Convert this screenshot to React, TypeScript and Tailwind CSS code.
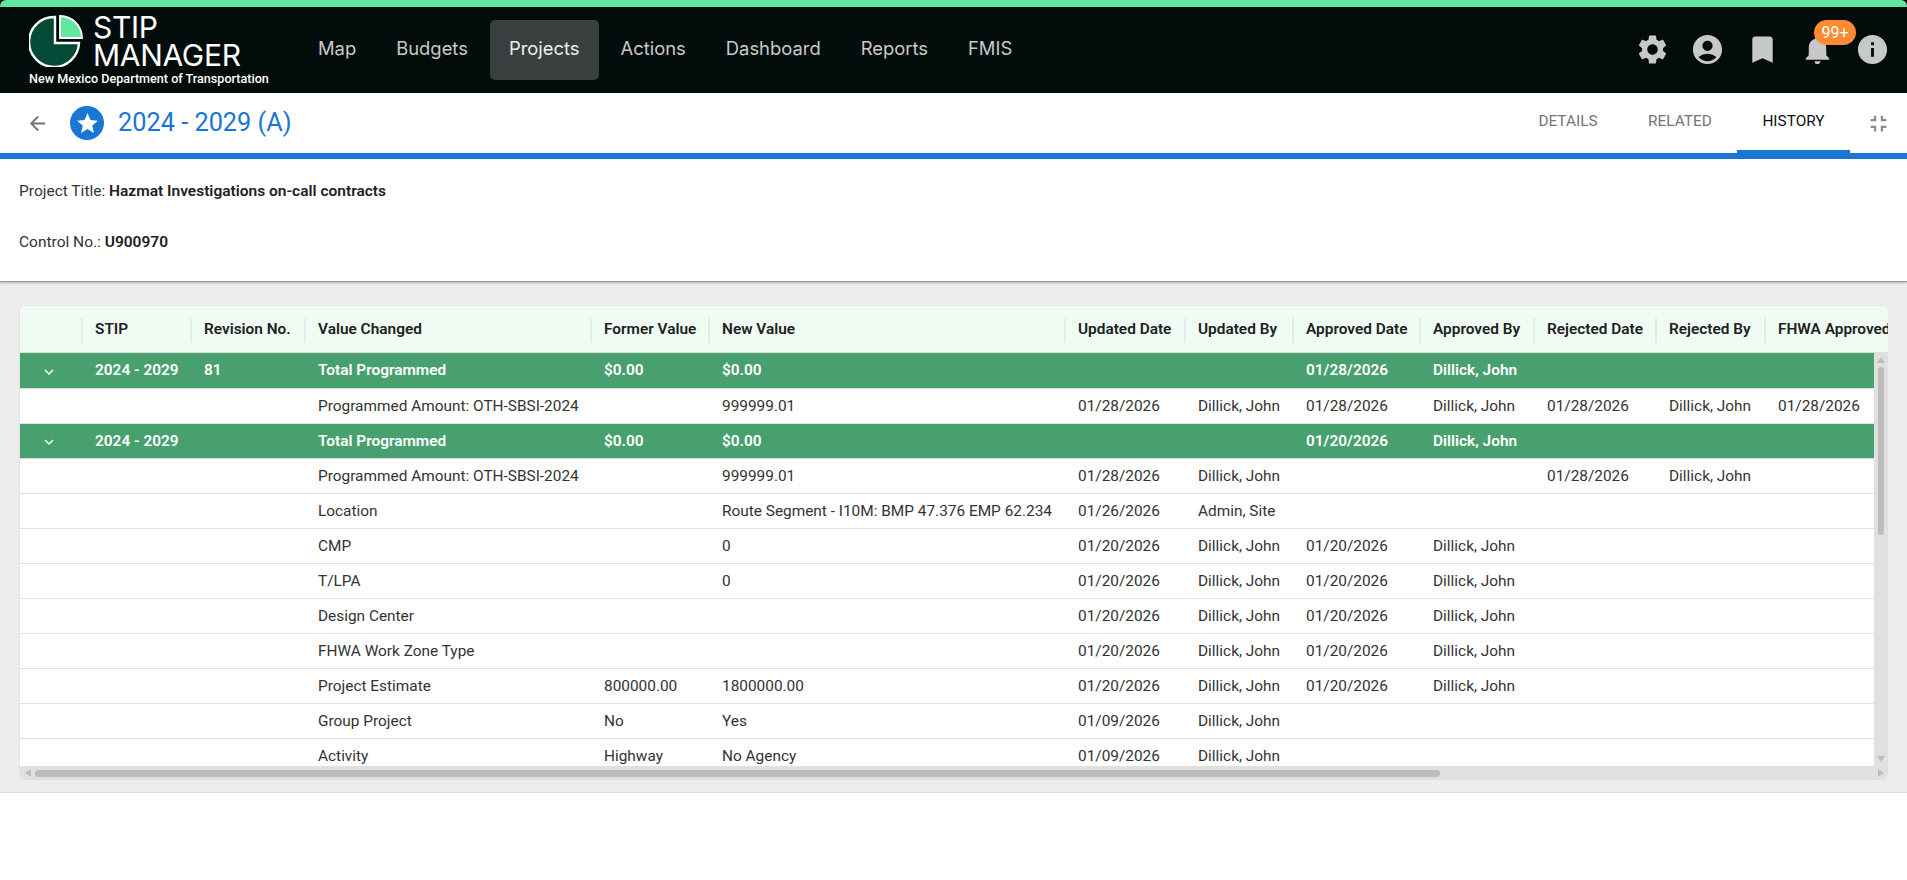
import { MdAccountCircle, MdArrowBack, MdBookmark, MdFullscreenExit, MdInfo, MdKeyboardArrowDown, MdNotifications, MdSettings, MdStar } from "react-icons/md";

const navItems = ["Map", "Budgets", "Projects", "Actions", "Dashboard", "Reports", "FMIS"];

const columns = [
    "",
    "STIP",
    "Revision No.",
    "Value Changed",
    "Former Value",
    "New Value",
    "Updated Date",
    "Updated By",
    "Approved Date",
    "Approved By",
    "Rejected Date",
    "Rejected By",
    "FHWA Approved Date",
];

const gridCols = "grid grid-cols-[63px_109px_114px_286px_118px_356px_120px_108px_127px_114px_122px_109px_180px]";

const dj = "Dillick, John";

// values start at the STIP column
const rows: { group?: boolean; cells: string[] }[] = [
    { group: true, cells: ["2024 - 2029", "81", "Total Programmed", "$0.00", "$0.00", "", "", "01/28/2026", dj] },
    { cells: ["", "", "Programmed Amount: OTH-SBSI-2024", "", "999999.01", "01/28/2026", dj, "01/28/2026", dj, "01/28/2026", dj, "01/28/2026"] },
    { group: true, cells: ["2024 - 2029", "", "Total Programmed", "$0.00", "$0.00", "", "", "01/20/2026", dj] },
    { cells: ["", "", "Programmed Amount: OTH-SBSI-2024", "", "999999.01", "01/28/2026", dj, "", "", "01/28/2026", dj] },
    { cells: ["", "", "Location", "", "Route Segment - I10M: BMP 47.376 EMP 62.234", "01/26/2026", "Admin, Site"] },
    { cells: ["", "", "CMP", "", "0", "01/20/2026", dj, "01/20/2026", dj] },
    { cells: ["", "", "T/LPA", "", "0", "01/20/2026", dj, "01/20/2026", dj] },
    { cells: ["", "", "Design Center", "", "", "01/20/2026", dj, "01/20/2026", dj] },
    { cells: ["", "", "FHWA Work Zone Type", "", "", "01/20/2026", dj, "01/20/2026", dj] },
    { cells: ["", "", "Project Estimate", "800000.00", "1800000.00", "01/20/2026", dj, "01/20/2026", dj] },
    { cells: ["", "", "Group Project", "No", "Yes", "01/09/2026", dj] },
    { cells: ["", "", "Activity", "Highway", "No Agency", "01/09/2026", dj] },
];

function Logo() {
    return (
        <svg width="56" height="56" viewBox="0 0 56 56" className="shrink-0">
            <path d="M26 6 A25 25 0 1 0 50 32 L26 32 Z" fill="#044a36" stroke="#ffffff" strokeWidth="2.4" />
            <path d="M31 5 A22 22 0 0 1 53 27 L31 27 Z" fill="#63e6a0" stroke="#ffffff" strokeWidth="1.8" />
        </svg>
    );
}

function Triangle({ dir }: { dir: "up" | "down" | "left" | "right" }) {
    const pts = {
        up: "4,1 8,7 0,7",
        down: "0,1 8,1 4,7",
        left: "7,0 7,8 1,4",
        right: "1,0 1,8 7,4",
    }[dir];
    return (
        <svg width="8" height="8" viewBox="0 0 8 8">
            <polygon points={pts} fill="#bdbdbd" />
        </svg>
    );
}

export default function App() {
    return (
        <div className="h-[880px] bg-white flex flex-col overflow-hidden font-['Roboto',sans-serif] text-[15.4px] text-[#333333]">
            {/* Top bar */}
            <div className="bg-[#020d0b] shrink-0">
                <div className="h-[7px] bg-[#63e6a0] rounded-t-[6px]"></div>
                <div className="h-[86px] flex items-center pl-[29px]">
                    <div className="w-[262px] h-[86px] flex flex-col shrink-0">
                        <div className="flex h-[64px] items-center">
                            <div className="w-[64px]"><Logo /></div>
                            <div className="font-['Inter',sans-serif] text-white text-[30px] leading-[28px] font-normal tracking-[-0.3px] pt-[3px]">
                                <div>STIP</div>
                                <div>MANAGER</div>
                            </div>
                        </div>
                        <div className="text-white text-[12.6px] leading-[16px] font-medium whitespace-nowrap">New Mexico Department of Transportation</div>
                    </div>
                    <nav className="flex items-center gap-[4px] font-['Inter',sans-serif] text-[18.4px] ml-[9px]">
                        {navItems.map((item) => (
                            <div
                                key={item}
                                className={item === "Projects" ? "h-[60px] pb-[2px] flex items-center px-[19px] rounded-[5px] bg-[#383f3e] text-[#eeeeee]" : "h-[60px] pb-[2px] flex items-center px-[18px] text-[#c9c9c9]"}
                            >
                                {item}
                            </div>
                        ))}
                    </nav>
                    <div className="ml-auto mr-[17px] flex items-center gap-[20px] text-[#c8c8c8] -mt-[2px]">
                        <MdSettings size={35} />
                        <MdAccountCircle size={35} />
                        <MdBookmark size={35} />
                        <div className="relative">
                            <MdNotifications size={35} />
                            <span className="absolute -top-[12px] left-[14px] w-[42px] h-[25px] rounded-full bg-[#ff8a33] text-white text-[16px] leading-[25px] text-center">99+</span>
                        </div>
                        <MdInfo size={35} />
                    </div>
                </div>
            </div>

            {/* Title bar */}
            <div className="h-[66px] shrink-0 flex items-center border-b-[6px] border-[#1976d2] pl-[26px] pr-[15px]">
                <MdArrowBack size={23} className="text-[#757575]" />
                <div className="ml-[21px] w-[34px] h-[34px] rounded-full bg-[#1976d2] flex items-center justify-center">
                    <MdStar size={25} className="text-white" />
                </div>
                <div className="ml-[14px] text-[25.3px] text-[#1976d2]">2024 - 2029 (A)</div>
                <div className="ml-auto flex items-center h-[60px]">
                    <div className="w-[110px] h-[60px] pb-[2px] flex items-center justify-center text-[#757575]">DETAILS</div>
                    <div className="w-[114px] h-[60px] pb-[2px] flex items-center justify-center text-[#757575]">RELATED</div>
                    <div className="w-[113px] h-[66px] -mb-[6px] pt-[1px] flex items-center justify-center text-[#111111] border-b-[9px] border-[#1976d2]">HISTORY</div>
                    <MdFullscreenExit size={27} className="ml-[15px] text-[#8c8c8c]" />
                </div>
            </div>

            {/* Project info */}
            <div className="h-[123px] shrink-0 pl-[19px] pt-[22px] text-[15.5px] border-b border-[#9a9a9a] shadow-[0_1px_2px_rgba(0,0,0,0.25)] relative">
                <div className="h-[20px] leading-[20px]">Project Title: <span className="font-semibold text-[#212121]">Hazmat Investigations on-call contracts</span></div>
                <div className="h-[20px] leading-[20px] mt-[31px]">Control No.: <span className="font-semibold text-[#212121]">U900970</span></div>
            </div>

            {/* History grid */}
            <div className="h-[511px] shrink-0 bg-[#ededed] border-b border-[#dddddd] pt-[23px] pl-[19px] pr-[19px]">
                <div className="h-[475px] rounded-[6px] overflow-hidden border-l border-t border-[#e3e3e3] bg-white flex flex-col">
                    <div className="h-[47px] shrink-0 overflow-hidden bg-[#eefcf4] border-b border-[#dddddd]">
                        <div className={`${gridCols} w-[1906px] h-[46px] font-semibold text-[#212121]`}>
                            {columns.map((col, i) => (
                                <div key={i} className="flex items-center justify-between pl-[12px] pt-[2px] whitespace-nowrap overflow-hidden">
                                    <span>{col}</span>
                                    <span className="w-[2px] h-[25px] shrink-0 bg-[#e4eae7]"></span>
                                </div>
                            ))}
                        </div>
                    </div>
                    <div className="flex-1 flex min-h-0">
                        <div className="flex-1 min-w-0 overflow-hidden">
                            <div className="w-[1906px]">
                                {rows.map((row, r) => (
                                    <div
                                        key={r}
                                        className={row.group ? `${gridCols} h-[35px] first:h-[36px] pt-[1px] items-center bg-[#48a06f] text-white font-semibold border-b border-[#dddddd]` : `${gridCols} h-[35px] pt-[1px] items-center bg-white border-b border-[#e0e0e0]`}
                                    >
                                        <div className="flex justify-center pr-[6px] pt-[1px]">
                                            {row.group ? <MdKeyboardArrowDown size={18} /> : null}
                                        </div>
                                        {row.cells.map((cell, c) => (
                                            <div key={c} className="pl-[12px] whitespace-nowrap">{cell}</div>
                                        ))}
                                    </div>
                                ))}
                            </div>
                        </div>
                        {/* vertical scrollbar */}
                        <div className="w-[14px] shrink-0 bg-[#e0e0e0] flex flex-col items-center py-[3px]">
                            <Triangle dir="up" />
                            <div className="w-[6px] h-[168px] mt-[3px] rounded-full bg-[#bdbdbd]"></div>
                            <div className="mt-auto"><Triangle dir="down" /></div>
                        </div>
                    </div>
                    {/* horizontal scrollbar */}
                    <div className="h-[14px] shrink-0 bg-[#e0e0e0] flex items-center pl-[4px] pr-[3px]">
                        <Triangle dir="left" />
                        <div className="w-[1405px] h-[7px] ml-[3px] rounded-full bg-[#bdbdbd]"></div>
                        <div className="ml-auto flex"><Triangle dir="right" /></div>
                    </div>
                </div>
            </div>
        </div>
    );
}
